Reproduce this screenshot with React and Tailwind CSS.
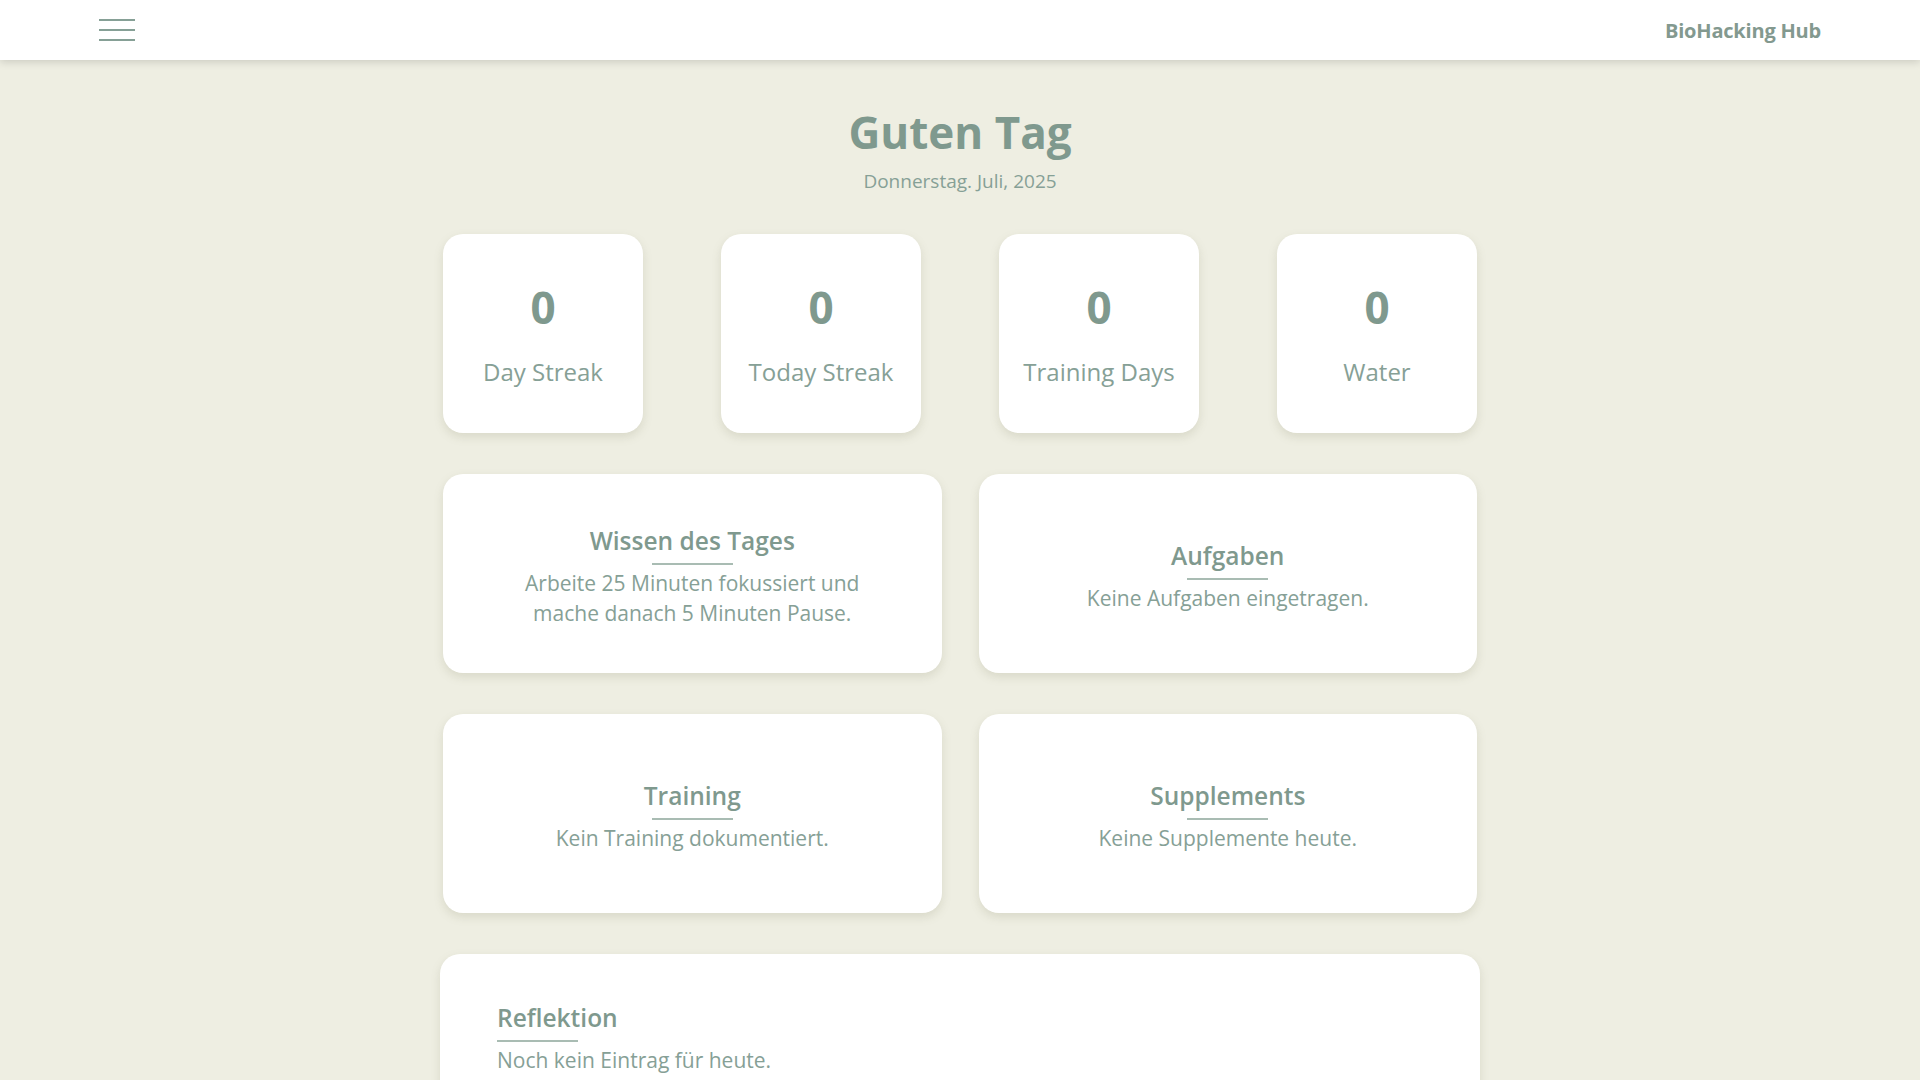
import React from "react";

const stats = [
  { value: 0, label: "Day Streak" },
  { value: 0, label: "Today Streak" },
  { value: 0, label: "Training Days" },
  { value: 0, label: "Water" },
];

const cards = [
  {
    title: "Wissen des Tages",
    text: "Arbeite 25 Minuten fokussiert und mache danach 5 Minuten Pause.",
  },
  { title: "Aufgaben", text: "Keine Aufgaben eingetragen." },
  { title: "Training", text: "Kein Training dokumentiert." },
  { title: "Supplements", text: "Keine Supplemente heute." },
];

function Card({ title, text }) {
  return (
    <div className="h-[199px] bg-white rounded-[20px] shadow-[0_4px_10px_rgba(120,120,90,0.18)] flex flex-col items-center justify-center text-center px-12 pt-[5px]">
      <h3 className="text-[24.5px] font-semibold leading-[32px] text-[#7f998e]">{title}</h3>
      <div className="w-[81px] h-[2px] bg-[#a9bcb3] mt-[6px] mb-[3px]" />
      <p className="text-[21px] leading-[30px] text-[#86a096] max-w-[380px]">{text}</p>
    </div>
  );
}

export default function App() {
  return (
    <div className="min-h-screen bg-[#eeeee2] font-['Open_Sans',sans-serif]">
      {/* Kopfzeile */}
      <header className="h-[60px] bg-white shadow-[0_2px_8px_rgba(0,0,0,0.15)] flex items-center justify-between px-[99px] relative z-10">
        <button className="flex flex-col gap-[8px] w-[36px]">
          <span className="block h-[2px] w-full bg-[#86a096]" />
          <span className="block h-[2px] w-full bg-[#86a096]" />
          <span className="block h-[2px] w-full bg-[#86a096]" />
        </button>
        <span className="text-[20px] font-bold text-[#83998f] tracking-[-0.2px] mt-[1px]">BioHacking Hub</span>
      </header>

      <main className="w-[1034px] mx-auto pt-[44px] pb-10">
        <div className="text-center">
          <h1 className="text-[44px] font-bold leading-[56px] text-[#7f998e]">Guten Tag</h1>
          <p className="text-[19px] leading-[26px] text-[#86a096] mt-[8px]">Donnerstag. Juli, 2025</p>
        </div>

        {/* Statistiken */}
        <div className="grid grid-cols-4 gap-[78px] mt-[40px]">
          {stats.map((s) => (
            <div
              key={s.label}
              className="h-[199px] bg-white rounded-[20px] shadow-[0_4px_10px_rgba(120,120,90,0.18)] flex flex-col items-center justify-center"
            >
              <span className="text-[44px] font-bold leading-[56px] text-[#7f998e]">{s.value}</span>
              <span className="text-[24px] leading-[34px] text-[#86a096] mt-[20px]">{s.label}</span>
            </div>
          ))}
        </div>

        {/* Karten */}
        <div className="grid grid-cols-2 gap-x-[37px] gap-y-[41px] mt-[41px]">
          {cards.map((c) => (
            <Card key={c.title} {...c} />
          ))}
        </div>

        {/* Reflektion */}
        <div className="-mx-[3px] mt-[41px] bg-white rounded-[20px] shadow-[0_4px_10px_rgba(120,120,90,0.18)] pl-[57px] pr-[48px] pt-[48px] pb-[40px]">
          <h3 className="text-[24.5px] font-semibold leading-[32px] text-[#7f998e]">Reflektion</h3>
          <div className="w-[81px] h-[2px] bg-[#a9bcb3] mt-[6px] mb-[3px]" />
          <p className="text-[21px] leading-[30px] text-[#86a096]">Noch kein Eintrag für heute.</p>
        </div>
      </main>
    </div>
  );
}
